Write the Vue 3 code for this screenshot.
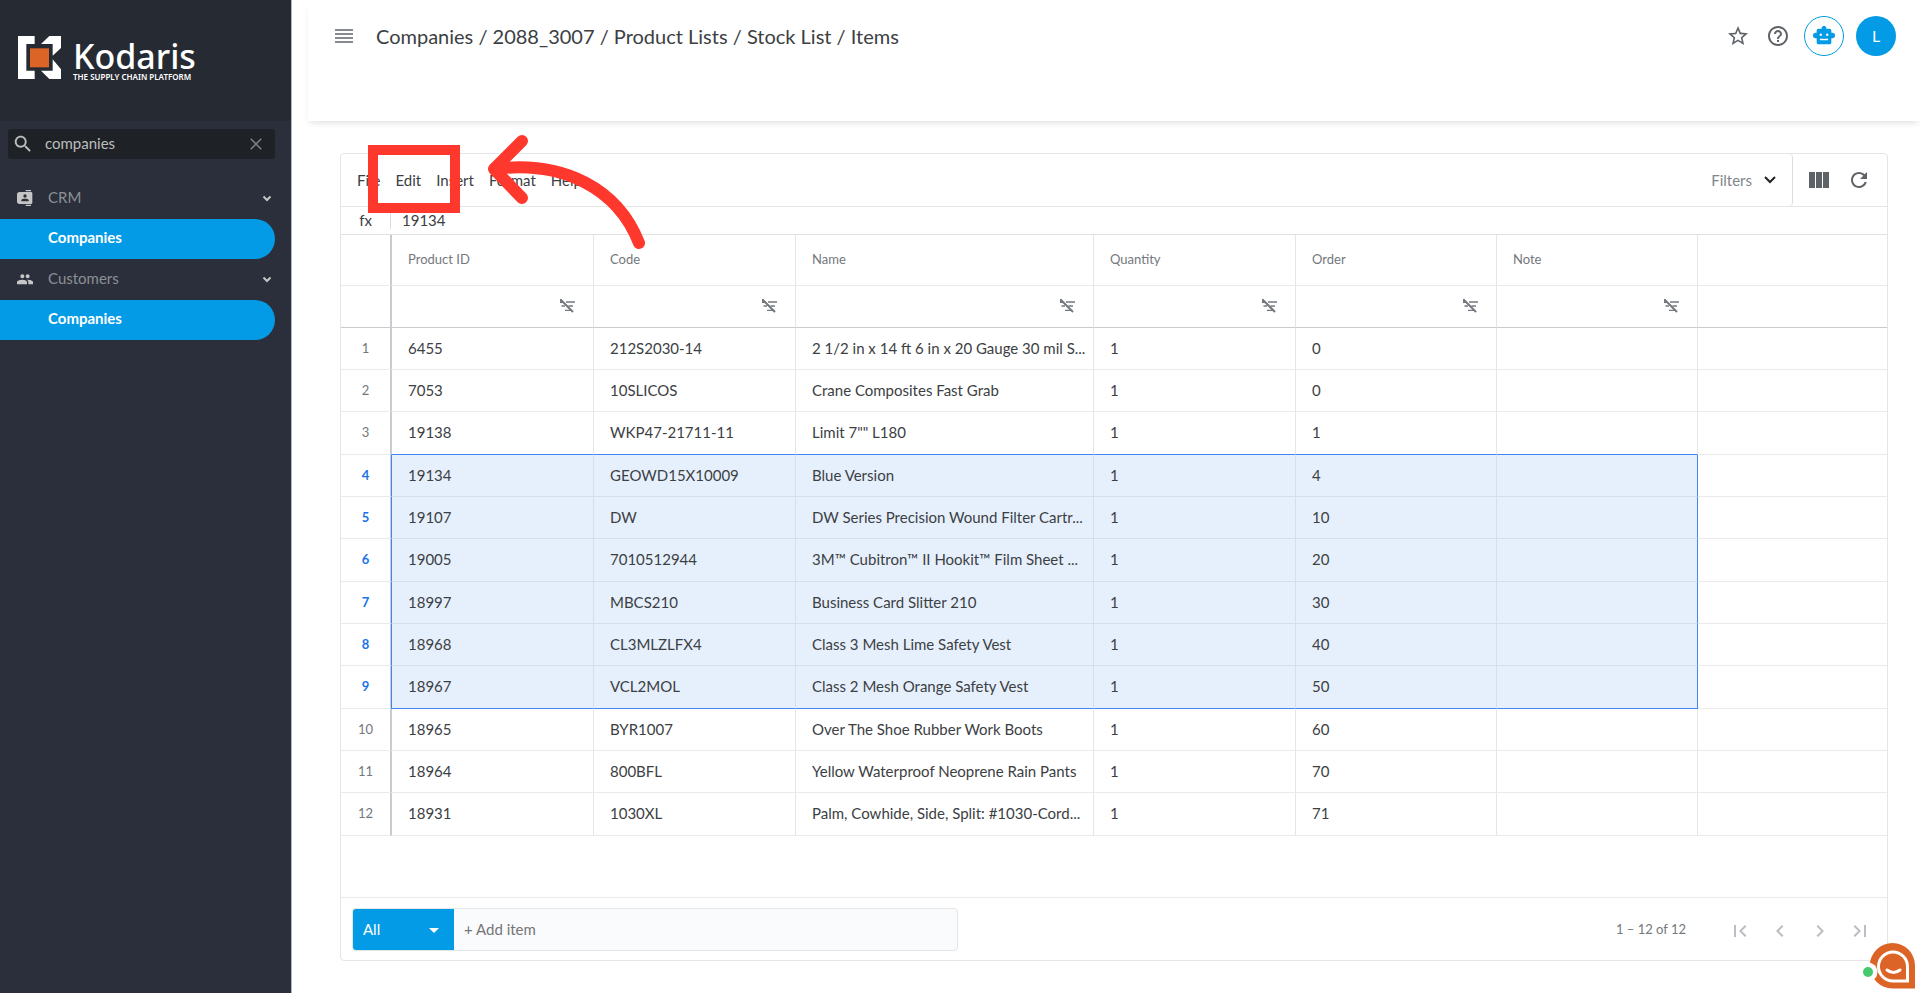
<script setup>
import { ref } from 'vue'

const search = ref('companies')
const formula = ref('19134')
const newItem = ref('')
const scope = ref('All')

const navGroups = [
    { label: 'CRM', icon: 'contacts', child: 'Companies' },
    { label: 'Customers', icon: 'people', child: 'Companies' }
]

const crumbs = ['Companies', '2088_3007', 'Product Lists', 'Stock List', 'Items']
const menus = ['File', 'Edit', 'Insert', 'Format', 'Help']

const columns = [
    { key: 'id', label: 'Product ID' },
    { key: 'code', label: 'Code' },
    { key: 'name', label: 'Name' },
    { key: 'quantity', label: 'Quantity' },
    { key: 'order', label: 'Order' },
    { key: 'note', label: 'Note' }
]

const rows = [
    { id: '6455', code: '212S2030-14', name: '2 1/2 in x 14 ft 6 in x 20 Gauge 30 mil S...', quantity: 1, order: 0 },
    { id: '7053', code: '10SLICOS', name: 'Crane Composites Fast Grab', quantity: 1, order: 0 },
    { id: '19138', code: 'WKP47-21711-11', name: 'Limit 7"" L180', quantity: 1, order: 1 },
    { id: '19134', code: 'GEOWD15X10009', name: 'Blue Version', quantity: 1, order: 4 },
    { id: '19107', code: 'DW', name: 'DW Series Precision Wound Filter Cartr...', quantity: 1, order: 10 },
    { id: '19005', code: '7010512944', name: '3M™ Cubitron™ II Hookit™ Film Sheet ...', quantity: 1, order: 20 },
    { id: '18997', code: 'MBCS210', name: 'Business Card Slitter 210', quantity: 1, order: 30 },
    { id: '18968', code: 'CL3MLZLFX4', name: 'Class 3 Mesh Lime Safety Vest', quantity: 1, order: 40 },
    { id: '18967', code: 'VCL2MOL', name: 'Class 2 Mesh Orange Safety Vest', quantity: 1, order: 50 },
    { id: '18965', code: 'BYR1007', name: 'Over The Shoe Rubber Work Boots', quantity: 1, order: 60 },
    { id: '18964', code: '800BFL', name: 'Yellow Waterproof Neoprene Rain Pants', quantity: 1, order: 70 },
    { id: '18931', code: '1030XL', name: 'Palm, Cowhide, Side, Split: #1030-Cord...', quantity: 1, order: 71 }
]

const selection = { first: 4, last: 9 }

const pagers = [
    { label: 'First page', path: 'M18.41 16.59L13.82 12l4.59-4.59L17 6l-6 6 6 6zM6 6h2v12H6z' },
    { label: 'Previous page', path: 'M15.41 7.41L14 6l-6 6 6 6 1.41-1.41L10.83 12z' },
    { label: 'Next page', path: 'M10 6L8.59 7.41 13.17 12l-4.58 4.59L10 18l6-6z' },
    { label: 'Last page', path: 'M5.59 7.41L10.18 12l-4.59 4.59L7 18l6-6-6-6zM16 6h2v12h-2z' }
]

function rowClass(number) {
    return {
        selected: number >= selection.first && number <= selection.last,
        'selected-end': number === selection.last,
        'before-selected': number === selection.first - 1
    }
}
</script>

<template>
    <div class="layout">
        <aside class="sidebar">
            <a href="#" class="brand" aria-label="Kodaris">
                <svg class="brand-mark" viewBox="54 107 129 129" aria-hidden="true">
                    <path fill="#fff" d="M54 107h50v24H79v80h25v25H54z" />
                    <path fill="#fff" d="M148 107h35v36l-25 23v-35h-35z" />
                    <path fill="#fff" d="M158 177l25 30v29h-35l-25-25h35z" />
                    <path fill="#dd6427" d="M90 144h57v57H90z" />
                </svg>
                <span class="brand-text">
                    <span class="brand-name">Kodaris</span>
                    <span class="brand-tagline">THE SUPPLY CHAIN PLATFORM</span>
                </span>
            </a>
            <div class="search">
                <svg viewBox="0 0 24 24" class="search-icon" aria-hidden="true">
                    <path
                        d="M15.5 14h-.79l-.28-.27C15.41 12.59 16 11.11 16 9.5 16 5.91 13.09 3 9.5 3S3 5.91 3 9.5 5.91 16 9.5 16c1.61 0 3.09-.59 4.23-1.57l.27.28v.79l5 4.99L20.49 19l-4.99-5zm-6 0C7.01 14 5 11.99 5 9.5S7.01 5 9.5 5 14 7.01 14 9.5 11.99 14 9.5 14z" />
                </svg>
                <input v-model="search" type="text" aria-label="Search menu" />
                <button type="button" aria-label="Clear search" @click="search = ''">
                    <svg viewBox="0 0 24 24" aria-hidden="true">
                        <path d="M5 5l14 14M19 5L5 19" fill="none" stroke="currentColor" stroke-width="2" />
                    </svg>
                </button>
            </div>
            <nav>
                <template v-for="group in navGroups" :key="group.label">
                    <button type="button" class="nav-group">
                        <svg v-if="group.icon === 'contacts'" viewBox="0 0 24 24" aria-hidden="true">
                            <path
                                d="M13 0h8v2h-8zM13 22h8v2h-8zM4 3h17a2 2 0 0 1 2 2v14a2 2 0 0 1-2 2H4a4 4 0 0 1-4-4V7a4 4 0 0 1 4-4zm8 3.5a2.5 2.5 0 1 0 0 5 2.5 2.5 0 0 0 0-5zM6.500 17h11v-1.500c0-2-3-2.500-5.500-2.500s-5.500.5-5.500 2.500z"
                                fill-rule="evenodd" />
                        </svg>
                        <svg v-else viewBox="0 0 24 24" aria-hidden="true">
                            <path
                                d="M16 11c1.66 0 2.99-1.34 2.99-3S17.66 5 16 5s-3 1.34-3 3 1.34 3 3 3zm-8 0c1.66 0 2.99-1.34 2.99-3S9.66 5 8 5 5 6.34 5 8s1.34 3 3 3zm0 2c-2.33 0-8 1.17-8 3.5V20h15v-3.5c0-2.33-4.67-3.5-7-3.5zm8 0c-.29 0-.62.02-.97.05 1.16.84 1.97 1.97 1.97 3.45V20h7v-3.5c0-2.33-5.67-3.5-8-3.5z" />
                        </svg>
                        <span>{{ group.label }}</span>
                        <svg viewBox="0 0 24 24" class="nav-chevron" aria-hidden="true">
                            <path d="M5 9l7 7 7-7" fill="none" stroke="currentColor" stroke-width="4" />
                        </svg>
                    </button>
                    <a href="#" class="nav-item">{{ group.child }}</a>
                </template>
            </nav>
        </aside>

        <main>
            <header class="topbar">
                <button type="button" class="burger-button" aria-label="Toggle menu">
                    <svg viewBox="0 0 18 14" aria-hidden="true">
                        <path d="M0 1h18M0 5h18M0 9h18M0 13h18" stroke="currentColor" stroke-width="1.6" />
                    </svg>
                </button>
                <h1>{{ crumbs.join(' / ') }}</h1>
                <div class="topbar-actions">
                    <button type="button" class="icon-button" aria-label="Favorite">
                        <svg viewBox="0 0 24 24" aria-hidden="true">
                            <path
                                d="M22 9.24l-7.19-.62L12 2 9.19 8.63 2 9.24l5.46 4.73L5.82 21 12 17.27 18.18 21l-1.63-7.03L22 9.24zM12 15.4l-3.76 2.27 1-4.28-3.32-2.88 4.38-.38L12 6.1l1.71 4.04 4.38.38-3.32 2.88 1 4.28L12 15.4z" />
                        </svg>
                    </button>
                    <button type="button" class="icon-button" aria-label="Help">
                        <svg viewBox="0 0 24 24" aria-hidden="true">
                            <path
                                d="M11 18h2v-2h-2v2zm1-16C6.48 2 2 6.48 2 12s4.48 10 10 10 10-4.48 10-10S17.52 2 12 2zm0 18c-4.41 0-8-3.59-8-8s3.59-8 8-8 8 3.59 8 8-3.59 8-8 8zm0-14c-2.21 0-4 1.79-4 4h2c0-1.1.9-2 2-2s2 .9 2 2c0 2-3 1.75-3 5h2c0-2.25 3-2.5 3-5 0-2.21-1.79-4-4-4z" />
                        </svg>
                    </button>
                    <button type="button" class="round assistant" aria-label="Assistant">
                        <svg viewBox="0 0 24 24" aria-hidden="true">
                            <path fill-rule="evenodd"
                                d="M12 1a2.5 2.5 0 0 1 2.4 3H18a2 2 0 0 1 2 2v2.5h1a3 3 0 0 1 0 6h-1V19a2 2 0 0 1-2 2H6a2 2 0 0 1-2-2v-4.5H3a3 3 0 0 1 0-6h1V6a2 2 0 0 1 2-2h3.6A2.5 2.5 0 0 1 12 1zM8.5 9.3a1.3 1.3 0 1 0 0 2.6 1.3 1.3 0 0 0 0-2.6zm7 0a1.3 1.3 0 1 0 0 2.6 1.3 1.3 0 0 0 0-2.6zM7.5 15v1.5h9V15z" />
                        </svg>
                    </button>
                    <button type="button" class="round avatar" aria-label="Account">L</button>
                </div>
            </header>

            <section class="card">
                <div class="toolbar">
                    <div class="menubar">
                        <button v-for="menu in menus" :key="menu" type="button">{{ menu }}</button>
                    </div>
                    <button type="button" class="filters">
                        Filters
                        <svg viewBox="0 0 12 12" aria-hidden="true">
                            <path d="M1 3l5 5 5-5" fill="none" stroke="#222" stroke-width="2" />
                        </svg>
                    </button>
                    <div class="toolbar-actions">
                        <button type="button" class="icon-button" aria-label="Columns">
                            <svg viewBox="0 0 24 24" aria-hidden="true">
                                <path d="M2 4h6v16H2zM9 4h6v16H9zM16 4h6v16h-6z" />
                            </svg>
                        </button>
                        <button type="button" class="icon-button" aria-label="Refresh">
                            <svg viewBox="0 0 24 24" aria-hidden="true">
                                <path
                                    d="M17.65 6.35C16.2 4.9 14.21 4 12 4c-4.42 0-7.99 3.58-7.99 8s3.57 8 7.99 8c3.73 0 6.84-2.55 7.73-6h-2.08c-.82 2.33-3.04 4-5.65 4-3.31 0-6-2.69-6-6s2.69-6 6-6c1.66 0 3.14.69 4.22 1.78L13 11h7V4l-2.35 2.35z" />
                            </svg>
                        </button>
                    </div>
                </div>

                <div class="formula">
                    <label for="formula-input">fx</label>
                    <input id="formula-input" v-model="formula" type="text" />
                </div>

                <div class="grid">
                    <table>
                        <colgroup>
                            <col class="col-number" />
                            <col v-for="column in columns" :key="column.key" :class="'col-' + column.key" />
                            <col />
                        </colgroup>
                        <thead>
                            <tr class="labels">
                                <th class="number"></th>
                                <th v-for="column in columns" :key="column.key" scope="col">{{ column.label }}</th>
                                <th class="filler"></th>
                            </tr>
                            <tr class="column-filters">
                                <td class="number"></td>
                                <td v-for="column in columns" :key="column.key">
                                    <button type="button" :aria-label="'Filter ' + column.label">
                                        <svg viewBox="0 0 16 16" aria-hidden="true">
                                            <path d="M7 4h9M9.5 8H14M2.5 8H6M6 12.3h6" fill="none"
                                                stroke="currentColor" stroke-width="1.3" />
                                            <path d="M1.5 1.5l12.5 12.5" fill="none" stroke="currentColor"
                                                stroke-width="2" />
                                            <path d="M1 .5v4.5l4.5 0z" />
                                        </svg>
                                    </button>
                                </td>
                                <td class="filler"></td>
                            </tr>
                        </thead>
                        <tbody>
                            <tr v-for="(row, index) in rows" :key="row.id" :class="rowClass(index + 1)">
                                <th class="number" scope="row">{{ index + 1 }}</th>
                                <td v-for="column in columns" :key="column.key">{{ row[column.key] }}</td>
                                <td class="filler"></td>
                            </tr>
                        </tbody>
                    </table>
                </div>

                <footer>
                    <div class="add-item">
                        <select v-model="scope" aria-label="Item scope">
                            <option>All</option>
                        </select>
                        <svg viewBox="0 0 10 5" class="select-arrow" aria-hidden="true">
                            <path d="M0 0h10L5 5z" />
                        </svg>
                        <input v-model="newItem" type="text" placeholder="+ Add item" aria-label="Add item" />
                    </div>
                    <div class="pagination">
                        <span>1 – 12 of 12</span>
                        <button v-for="pager in pagers" :key="pager.label" type="button" :aria-label="pager.label"
                            disabled>
                            <svg viewBox="0 0 24 24" aria-hidden="true">
                                <path :d="pager.path" />
                            </svg>
                        </button>
                    </div>
                </footer>
            </section>
        </main>

        <div class="highlight" aria-hidden="true" />
        <svg class="arrow" viewBox="0 0 164 120" aria-hidden="true">
            <path d="M12 38C82 29 136 58 157 112M40 10L12 38l28 29" fill="none" stroke="#ff382d" stroke-width="12"
                stroke-linecap="round" stroke-linejoin="round" />
        </svg>

        <button type="button" class="chat" aria-label="Open chat">
            <svg viewBox="0 0 58 48" aria-hidden="true">
                <path d="M35.5 2A22.5 22.5 0 0 1 58 24.5V47.5H35.5a22.5 22.5 0 0 1 0-45.5z" fill="#dd6427" />
                <circle cx="11" cy="31" r="9.5" fill="#fff" />
                <circle cx="11" cy="31" r="5" fill="#46ca6d" />
                <path d="M36 11A14.5 14.5 0 0 1 50.5 25.5V40H36a14.5 14.5 0 0 1 0-29z" fill="#dd6427" stroke="#fff"
                    stroke-width="3" />
                <path d="M30 29q6.5 5 13 0" fill="none" stroke="#fff" stroke-width="3" stroke-linecap="round" />
            </svg>
        </button>
    </div>
</template>

<style>
body {
    background: #fff;
}
</style>

<style scoped>
.layout {
    position: relative;
    display: flex;
    min-height: 100vh;
    overflow: hidden;
    font-family: Lato, "Noto Sans", sans-serif;
    font-size: 15px;
    line-height: 20px;
    color: #3c4043;
}

.layout *,
.layout *::before {
    box-sizing: border-box;
}

button,
input,
select {
    margin: 0;
    padding: 0;
    border: none;
    outline: none;
    background: transparent;
    color: inherit;
    font: inherit;
}

button {
    cursor: pointer;
}

svg {
    display: block;
    flex: none;
    fill: currentColor;
}

a {
    color: inherit;
    text-decoration: none;
}

.sidebar {
    flex: none;
    width: 292px;
    background: #2b2f3b;
    border-right: 1px solid #b5b7bb;
}

.brand {
    display: flex;
    align-items: center;
    gap: 12px;
    height: 121px;
    padding: 0 18px 6px;
    background: #262b33;
    color: #fff;
}

.brand-mark {
    width: 43px;
    height: 43px;
}

.brand-text {
    display: flex;
    flex-direction: column;
    padding-top: 4px;
    font-family: "Noto Sans", sans-serif;
}

.brand-name {
    font-size: 34px;
    font-weight: 500;
    line-height: 34px;
}

.brand-tagline {
    font-size: 8px;
    font-weight: 600;
    line-height: 8px;
    white-space: nowrap;
}

.search {
    display: flex;
    align-items: center;
    height: 30px;
    margin: 8px 16px 19px 8px;
    padding: 0 10px 0 4px;
    border-radius: 3px;
    background: #1e2227;
    color: #bdbdbd;
}

.search-icon {
    width: 22px;
    height: 22px;
    margin-right: 11px;
}

.search input {
    flex: 1;
    min-width: 0;
    height: 28px;
    padding-bottom: 2px;
}

.search button {
    color: #80848a;
}

.search button svg {
    width: 18px;
    height: 18px;
}

.nav-group {
    display: flex;
    align-items: center;
    width: 100%;
    height: 41px;
    padding: 0 18px 2px 17px;
    color: #c6c6c6;
    text-align: left;
}

.nav-group svg {
    width: 16px;
    height: 16px;
}

.nav-group span {
    flex: 1;
    padding: 0 0 2px 15px;
    color: #8c8f94;
}

.nav-group .nav-chevron {
    width: 12px;
    height: 12px;
}

.nav-item {
    display: flex;
    align-items: center;
    height: 40px;
    margin-right: 16px;
    padding: 0 0 4px 48px;
    border-radius: 0 20px 20px 0;
    background: #039be5;
    color: #fff;
    font-weight: 700;
}

main {
    flex: 1;
    min-width: 0;
    display: flex;
    flex-direction: column;
}

.topbar {
    display: flex;
    align-items: flex-start;
    height: 121px;
    margin-left: 16px;
    padding: 16px 24px 0;
    box-shadow: 0 4px 6px -2px rgba(0, 0, 0, 0.12);
}

.topbar h1 {
    flex: 1;
    margin: 0 0 0 20px;
    font-size: 20px;
    font-weight: 400;
    line-height: 40px;
}

.burger-button,
.icon-button {
    display: flex;
    align-items: center;
    justify-content: center;
    width: 24px;
    height: 40px;
    color: #5f6368;
}

.burger-button svg {
    width: 18px;
    height: 14px;
}

.icon-button {
    width: 28px;
}

.icon-button svg {
    width: 24px;
    height: 24px;
}

.topbar-actions {
    display: flex;
    align-items: center;
    gap: 12px;
}

.round {
    display: flex;
    align-items: center;
    justify-content: center;
    width: 40px;
    height: 40px;
    border-radius: 50%;
}

.assistant {
    border: 1px solid #039be5;
    color: #039be5;
}

.assistant svg {
    width: 22px;
    height: 22px;
}

.avatar {
    background: #039be5;
    color: #fff;
    font-size: 16px;
}

.card {
    flex: 1;
    display: flex;
    flex-direction: column;
    margin: 32px 32px 32px 48px;
    border: 1px solid #e4e5e7;
    border-radius: 4px;
}

.toolbar {
    display: flex;
    height: 53px;
    border-bottom: 1px solid #e4e5e7;
}

.menubar {
    flex: 1;
    display: flex;
    align-items: center;
    gap: 15px;
    padding-left: 16px;
}

.filters {
    display: flex;
    align-items: center;
    gap: 12px;
    padding: 0 16px;
    border-right: 1px solid #dadce0;
    border-radius: 0 4px 4px 0;
    color: #80868b;
}

.filters svg {
    width: 12px;
    height: 12px;
}

.toolbar-actions {
    display: flex;
    align-items: center;
    gap: 12px;
    padding: 0 14px 0 12px;
}

.formula {
    display: flex;
    align-items: center;
    height: 28px;
    padding-bottom: 2px;
    border-bottom: 1px solid #dfe1e4;
}

.formula label {
    width: 50px;
    border-right: 1px solid #dadce0;
    line-height: 18px;
    text-align: center;
}

.formula input {
    flex: 1;
    height: 24px;
    padding-left: 11px;
}

.grid {
    flex: 1;
}

table {
    width: 100%;
    table-layout: fixed;
    border-collapse: separate;
    border-spacing: 0;
}

.col-number {
    width: 50px;
}

.col-id {
    width: 203px;
}

.col-code,
.col-quantity {
    width: 202px;
}

.col-order,
.col-note {
    width: 201px;
}

.col-name {
    width: 298px;
}

th,
td {
    height: 42px;
    padding: 0 10px 2px 16px;
    overflow: hidden;
    border-right: 1px solid #e4e5e7;
    border-bottom: 1px solid #e8eaec;
    font-weight: 400;
    text-align: left;
    white-space: nowrap;
}

tbody tr:nth-child(3n) td {
    height: 43px;
}

/* The row header is closed by a double line shared with the first column */
th:nth-child(2),
td:nth-child(2) {
    border-left: 1px solid #c8ccd1;
}

.labels th {
    height: 51px;
    color: #74787d;
    font-size: 13px;
}

.column-filters td {
    height: 42px;
    padding-right: 18px;
    border-bottom-color: #c8ccd1;
}

.column-filters button {
    display: block;
    margin-left: auto;
    color: #74787d;
}

.column-filters svg {
    width: 16px;
    height: 16px;
}

th.number,
td.number {
    padding: 0 0 2px;
    border-right-color: #c8ccd1;
    text-align: center;
}

tbody .number {
    color: #74787d;
    font-size: 13px;
}

th.filler,
td.filler {
    border-right: none;
}

.selected td:not(.filler) {
    border-color: #d3dfec;
    background: #e6f0fd;
}

tbody .selected .number {
    color: #1a73e8;
    font-weight: 700;
}

.selected td:nth-child(2):not(.filler) {
    border-left-color: #4285f4;
}

.selected td:nth-child(7):not(.filler) {
    border-right-color: #4285f4;
}

.selected-end td:not(.filler),
.before-selected td:not(.filler) {
    border-bottom-color: #4285f4;
}

footer {
    display: flex;
    align-items: center;
    justify-content: space-between;
    height: 63px;
    padding: 0 7px 0 11px;
    border-top: 1px solid #e8eaec;
}

.add-item {
    display: grid;
    grid-template-columns: 101px 1fr;
    align-items: center;
    width: 606px;
    max-width: 50%;
    height: 43px;
    overflow: hidden;
    border: 1px solid #e4e5e7;
    border-radius: 4px;
    background: #fafbfc;
}

.add-item select {
    grid-area: 1 / 1;
    height: 43px;
    padding: 0 0 2px 10px;
    appearance: none;
    background: #039be5;
    color: #fff;
}

.select-arrow {
    grid-area: 1 / 1;
    justify-self: end;
    width: 10px;
    height: 5px;
    margin-right: 15px;
    color: #fff;
    pointer-events: none;
}

.add-item input {
    grid-area: 1 / 2;
    height: 41px;
    padding: 0 0 2px 10px;
}

.add-item input::placeholder {
    color: #757575;
    opacity: 1;
}

.pagination {
    display: flex;
    align-items: center;
    color: #74787d;
    font-size: 13px;
}

.pagination span {
    margin-right: 34px;
}

.pagination button {
    width: 40px;
    height: 40px;
    padding: 10px 8px 6px;
    color: #bdbdc1;
}

.pagination svg {
    width: 24px;
    height: 24px;
}

/* Tutorial callout drawn over the grid menus */
.highlight {
    position: absolute;
    top: 145px;
    left: 368px;
    width: 92px;
    height: 68px;
    border: 10px solid #ff382d;
    pointer-events: none;
}

.arrow {
    position: absolute;
    top: 131px;
    left: 482px;
    width: 164px;
    height: 120px;
    pointer-events: none;
}

.chat {
    position: fixed;
    right: 5px;
    bottom: 4px;
}

.chat svg {
    width: 58px;
    height: 48px;
}
</style>
